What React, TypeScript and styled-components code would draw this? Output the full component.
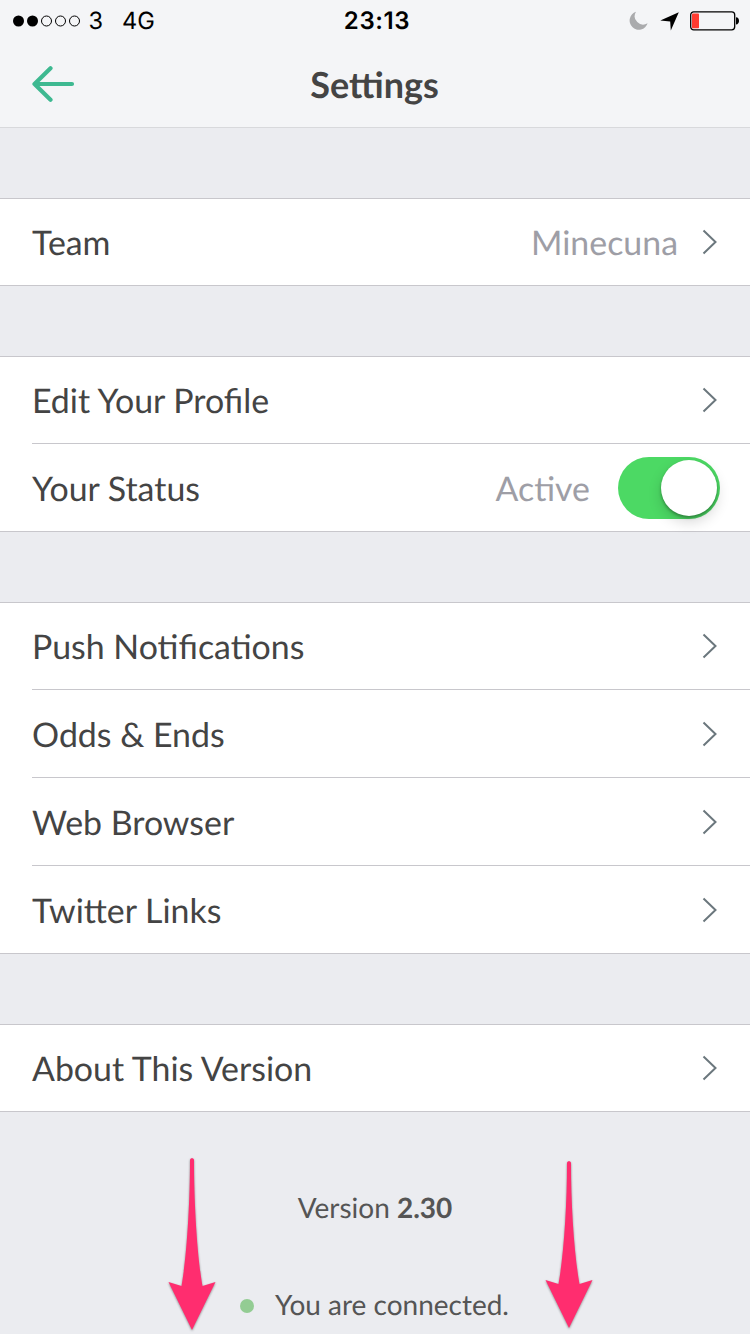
import React from "react";
import styled, { createGlobalStyle, css } from "styled-components";

const GlobalStyle = createGlobalStyle`
  * { box-sizing: border-box; }
  body { margin: 0; background: #ebecf0; }
`;

const Screen = styled.div`
  position: relative;
  width: 750px;
  height: 1334px;
  overflow: hidden;
  display: flex;
  flex-direction: column;
  background: #ebecf0;
  font-family: Lato, sans-serif;
  text-rendering: geometricPrecision;
  color: #444444;
`;

const Header = styled.header`
  height: 128px;
  flex: none;
  background: #f4f5f7;
  border-bottom: 1px solid #d8d9dc;
`;

const StatusBar = styled.div`
  height: 41px;
  padding: 0 10px 0 13px;
  display: grid;
  grid-template-columns: 1fr auto 1fr;
  align-items: center;
  font-family: Inter, sans-serif;
  font-size: 24px;
  color: #000;
`;

const Carrier = styled.div`
  display: flex;
  align-items: center;
`;

const CarrierText = styled.span<{ $gap: number }>`
  margin-left: ${(p) => p.$gap}px;
  padding-top: 1px;
  font-size: 23.6px;
  line-height: 40px;
`;

const Clock = styled.time`
  padding: 1px 0 0 1px;
  font-weight: 600;
  line-height: 40px;
  letter-spacing: 0.6px;
`;

const Indicators = styled.div`
  display: flex;
  justify-content: flex-end;
  align-items: center;
`;

const NavBar = styled.div`
  height: 86px;
  padding: 0 32px;
  display: grid;
  grid-template-columns: 1fr auto 1fr;
  align-items: center;
`;

const Title = styled.h1`
  margin: 0 1px 0 0;
  font-size: 36px;
  line-height: 44px;
  font-weight: 700;
`;

const BackButton = styled.button`
  display: flex;
  width: 44px;
  padding: 0;
  border: 0;
  background: none;
`;

const Group = styled.section`
  flex: none;
  margin-top: 70px;
  background: #fff;
  border: solid #c8c7cc;
  border-width: 1px 0;
`;

const Row = styled.div`
  margin-left: 32px;
  padding-right: 32px;
  height: 88px;
  display: flex;
  align-items: center;
  border-top: 1px solid #c8c7cc;
  &:first-child {
    height: 86px;
    border-top: 0;
  }
`;

const rowText = css`
  font-size: 33.9px;
  line-height: 44px;
  padding-top: 2px;
`;

const Label = styled.span`
  ${rowText}
  flex: 1;
`;

const Value = styled.span<{ $gap: number }>`
  ${rowText}
  color: #9e9ea6;
  margin-right: ${(p) => p.$gap}px;
`;

const Toggle = styled.div`
  width: 102px;
  height: 62px;
  margin-right: -2px;
  padding: 3px;
  border-radius: 31px;
  background: #4cd964;
  display: flex;
  justify-content: flex-end;
`;

const Knob = styled.div`
  width: 56px;
  height: 56px;
  border-radius: 50%;
  background: #fff;
  box-shadow: 0 6px 14px rgba(0, 0, 0, 0.16), 0 2px 3px rgba(0, 0, 0, 0.3);
`;

const Footer = styled.footer`
  display: flex;
  flex-direction: column;
  align-items: center;
  padding-top: 77px;
  font-size: 28px;
  line-height: 36px;
  color: #555;
`;

const Connection = styled.div`
  margin: 61px 1px 0 0;
  display: flex;
  align-items: center;
`;

const Dot = styled.i`
  width: 14px;
  height: 14px;
  margin: 3px 21px 0 0;
  border-radius: 50%;
  background: #93cc93;
`;

const Pointer = styled.svg<{ $x: number; $y: number }>`
  position: absolute;
  left: ${(p) => p.$x}px;
  top: ${(p) => p.$y}px;
  overflow: visible;
  filter: drop-shadow(0 1px 1px rgba(0, 0, 0, 0.4));
`;

const Signal = () => (
  <svg width="68" height="14" viewBox="0 0 68 14">
    {[0, 1, 2, 3, 4].map((i) => (
      <circle
        key={i}
        cx={5.5 + i * 14}
        cy="7"
        r={i < 2 ? 5.5 : 5}
        fill={i < 2 ? "#000" : "none"}
        stroke={i < 2 ? "none" : "#000"}
      />
    ))}
  </svg>
);

const Moon = () => (
  <svg width="19" height="20" viewBox="0 0 19 20">
    <path d="M7 0.8A9.2 9.2 0 1 0 18.6 12.3A8.4 8.4 0 0 1 7 0.8Z" fill="#aaabad" />
  </svg>
);

const Location = () => (
  <svg width="20" height="20" viewBox="0 0 20 20">
    <path d="M18.8 1.2L10.8 19.4L10.2 10.4L0.3 9.5Z" fill="#000" />
  </svg>
);

const Battery = () => (
  <svg width="50" height="20" viewBox="0 0 50 20">
    <rect x="0.7" y="0.8" width="44" height="18" rx="3" fill="none" stroke="#000" strokeWidth="1.3" />
    <rect x="2" y="2.6" width="7" height="14.6" rx="0.8" fill="#ff3b30" />
    <path d="M46 6.2C50 6.2 50 13.4 46 13.4Z" fill="#000" />
  </svg>
);

const IconSlot = styled.span<{ $gap: number }>`
  display: flex;
  margin-right: ${(p) => p.$gap}px;
`;

const BackArrow = () => (
  <svg width="44" height="38" viewBox="0 0 44 38">
    <path d="M18.5 3.2L2.5 19L18.5 34.8M2.5 19H40" fill="none" stroke="#3eb991" strokeWidth="4.2" strokeLinecap="round" strokeLinejoin="round" />
  </svg>
);

const Chevron = () => (
  <svg width="16" height="26" viewBox="0 0 16 26">
    <path d="M1.5 1.5L13.5 13L1.5 24.5" fill="none" stroke="#6b777d" strokeWidth="2" />
  </svg>
);

const PointerArrow = ({ x, y, height }: { x: number; y: number; height: number }) => {
  const h = height;
  const d = `M22 2C22 -0.5 26 -0.5 26 2C26 44 29 ${h - 75} 34.5 ${h - 44}L47.5 ${h - 48}L24 ${h}L0.5 ${h - 48}L13.5 ${h - 44}C19 ${h - 75} 22 44 22 2Z`;
  return (
    <Pointer $x={x} $y={y} width="48" height={h}>
      <path d={d} fill="#ff2d6f" />
    </Pointer>
  );
};

const LinkRow = ({ label, value }: { label: string; value?: string }) => (
  <Row>
    <Label>{label}</Label>
    {value && <Value $gap={24}>{value}</Value>}
    <Chevron />
  </Row>
);

export default function App() {
  return (
    <Screen>
      <GlobalStyle />
      <Header>
        <StatusBar>
          <Carrier>
            <Signal />
            <CarrierText $gap={7.5}>3</CarrierText>
            <CarrierText $gap={19}>4G</CarrierText>
          </Carrier>
          <Clock>23:13</Clock>
          <Indicators>
            <IconSlot $gap={12}><Moon /></IconSlot>
            <IconSlot $gap={10}><Location /></IconSlot>
            <Battery />
          </Indicators>
        </StatusBar>
        <NavBar>
          <BackButton aria-label="Back"><BackArrow /></BackButton>
          <Title>Settings</Title>
        </NavBar>
      </Header>
      <Group>
        <LinkRow label="Team" value="Minecuna" />
      </Group>
      <Group>
        <LinkRow label="Edit Your Profile" />
        <Row>
          <Label>Your Status</Label>
          <Value $gap={28}>Active</Value>
          <Toggle role="switch" aria-checked="true"><Knob /></Toggle>
        </Row>
      </Group>
      <Group>
        <LinkRow label="Push Notifications" />
        <LinkRow label="Odds & Ends" />
        <LinkRow label="Web Browser" />
        <LinkRow label="Twitter Links" />
      </Group>
      <Group>
        <LinkRow label="About This Version" />
      </Group>
      <Footer>
        <div>Version <b>2.30</b></div>
        <Connection><Dot />You are connected.</Connection>
      </Footer>
      <PointerArrow x={168} y={1158} height={172} />
      <PointerArrow x={545} y={1161} height={167} />
    </Screen>
  );
}
